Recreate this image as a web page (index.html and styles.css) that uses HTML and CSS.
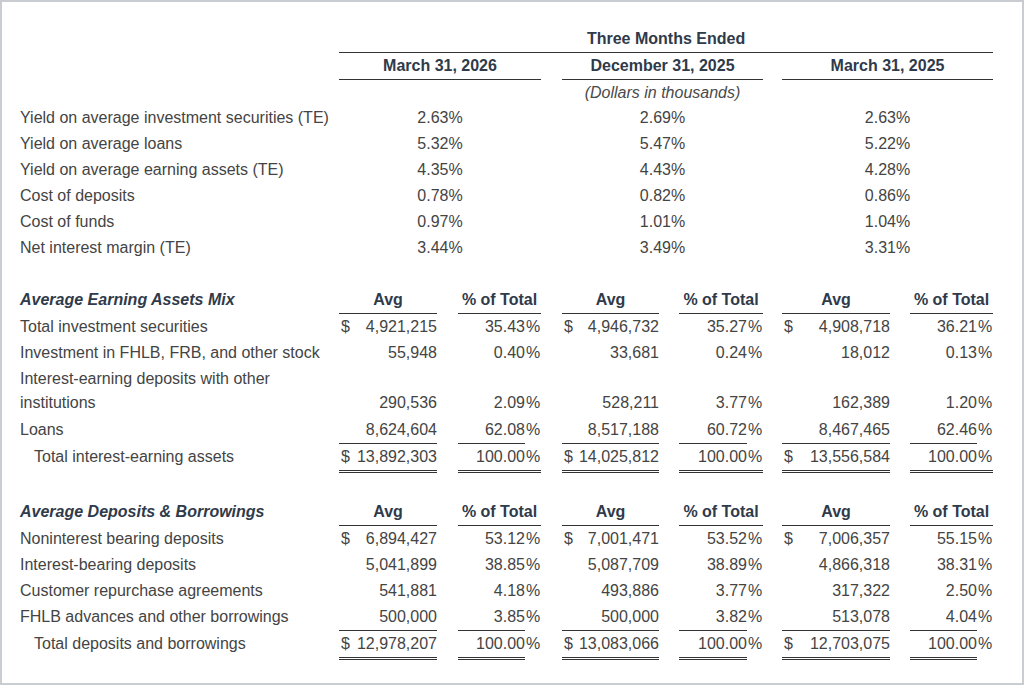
FILE: index.html
```html
<!DOCTYPE html>
<html lang="en">
<head>
<meta charset="utf-8">
<title>Three Months Ended</title>
<link rel="stylesheet" href="styles.css">
</head>
<body>
<div class="frame">
<table class="fin">
<colgroup>
<col class="c-lbl"><col class="c-avg1"><col class="c-gap21"><col class="c-pct67"><col class="c-pc"><col class="c-gap21">
<col class="c-avg2"><col class="c-gap20"><col class="c-pct68"><col class="c-pc"><col class="c-gap19">
<col class="c-avg3"><col class="c-gap20"><col class="c-pct67"><col class="c-pc">
</colgroup>
<tbody>
<tr class="r-title"><td></td><td colspan="14" class="hd">Three Months Ended</td></tr>
<tr class="r-dates"><td></td><td colspan="4" class="hd">March 31, 2026</td><td></td><td colspan="4" class="hd">December 31, 2025</td><td></td><td colspan="4" class="hd">March 31, 2025</td></tr>
<tr class="r-note"><td></td><td colspan="4"></td><td></td><td colspan="4" class="note">(Dollars in thousands)</td><td></td><td colspan="4"></td></tr>
<tr><td class="lbl">Yield on average investment securities (TE)</td><td colspan="4" class="ctr">2.63%</td><td></td><td colspan="4" class="ctr">2.69%</td><td></td><td colspan="4" class="ctr">2.63%</td></tr>
<tr><td class="lbl">Yield on average loans</td><td colspan="4" class="ctr">5.32%</td><td></td><td colspan="4" class="ctr">5.47%</td><td></td><td colspan="4" class="ctr">5.22%</td></tr>
<tr><td class="lbl">Yield on average earning assets (TE)</td><td colspan="4" class="ctr">4.35%</td><td></td><td colspan="4" class="ctr">4.43%</td><td></td><td colspan="4" class="ctr">4.28%</td></tr>
<tr><td class="lbl">Cost of deposits</td><td colspan="4" class="ctr">0.78%</td><td></td><td colspan="4" class="ctr">0.82%</td><td></td><td colspan="4" class="ctr">0.86%</td></tr>
<tr><td class="lbl">Cost of funds</td><td colspan="4" class="ctr">0.97%</td><td></td><td colspan="4" class="ctr">1.01%</td><td></td><td colspan="4" class="ctr">1.04%</td></tr>
<tr><td class="lbl">Net interest margin (TE)</td><td colspan="4" class="ctr">3.44%</td><td></td><td colspan="4" class="ctr">3.49%</td><td></td><td colspan="4" class="ctr">3.31%</td></tr>
<tr class="blank"><td colspan="15"></td></tr>

<tr class="sec"><td class="sec-lbl">Average Earning Assets Mix</td><td class="hd">Avg</td><td></td><td colspan="2" class="hd">% of Total</td><td></td><td class="hd">Avg</td><td></td><td colspan="2" class="hd">% of Total</td><td></td><td class="hd">Avg</td><td></td><td colspan="2" class="hd">% of Total</td></tr>
<tr><td class="lbl">Total investment securities</td><td class="num"><span class="cur">$</span>4,921,215</td><td></td><td class="num">35.43</td><td class="pc">%</td><td></td><td class="num"><span class="cur">$</span>4,946,732</td><td></td><td class="num">35.27</td><td class="pc">%</td><td></td><td class="num"><span class="cur">$</span>4,908,718</td><td></td><td class="num">36.21</td><td class="pc">%</td></tr>
<tr><td class="lbl">Investment in FHLB, FRB, and other stock</td><td class="num">55,948</td><td></td><td class="num">0.40</td><td class="pc">%</td><td></td><td class="num">33,681</td><td></td><td class="num">0.24</td><td class="pc">%</td><td></td><td class="num">18,012</td><td></td><td class="num">0.13</td><td class="pc">%</td></tr>
<tr class="wrap"><td class="lbl">Interest-earning deposits with other institutions</td><td class="num">290,536</td><td></td><td class="num">2.09</td><td class="pc">%</td><td></td><td class="num">528,211</td><td></td><td class="num">3.77</td><td class="pc">%</td><td></td><td class="num">162,389</td><td></td><td class="num">1.20</td><td class="pc">%</td></tr>
<tr><td class="lbl">Loans</td><td class="num">8,624,604</td><td></td><td class="num">62.08</td><td class="pc">%</td><td></td><td class="num">8,517,188</td><td></td><td class="num">60.72</td><td class="pc">%</td><td></td><td class="num">8,467,465</td><td></td><td class="num">62.46</td><td class="pc">%</td></tr>
<tr class="tot"><td class="lbl ind">Total interest-earning assets</td><td class="num ln"><span class="cur">$</span>13,892,303</td><td></td><td class="num ln">100.00</td><td class="pc dbl">%</td><td></td><td class="num ln"><span class="cur">$</span>14,025,812</td><td></td><td class="num ln">100.00</td><td class="pc dbl">%</td><td></td><td class="num ln"><span class="cur">$</span>13,556,584</td><td></td><td class="num ln">100.00</td><td class="pc dbl">%</td></tr>
<tr class="blank"><td colspan="15"></td></tr>

<tr class="sec"><td class="sec-lbl">Average Deposits &amp; Borrowings</td><td class="hd">Avg</td><td></td><td colspan="2" class="hd">% of Total</td><td></td><td class="hd">Avg</td><td></td><td colspan="2" class="hd">% of Total</td><td></td><td class="hd">Avg</td><td></td><td colspan="2" class="hd">% of Total</td></tr>
<tr><td class="lbl">Noninterest bearing deposits</td><td class="num"><span class="cur">$</span>6,894,427</td><td></td><td class="num">53.12</td><td class="pc">%</td><td></td><td class="num"><span class="cur">$</span>7,001,471</td><td></td><td class="num">53.52</td><td class="pc">%</td><td></td><td class="num"><span class="cur">$</span>7,006,357</td><td></td><td class="num">55.15</td><td class="pc">%</td></tr>
<tr><td class="lbl">Interest-bearing deposits</td><td class="num">5,041,899</td><td></td><td class="num">38.85</td><td class="pc">%</td><td></td><td class="num">5,087,709</td><td></td><td class="num">38.89</td><td class="pc">%</td><td></td><td class="num">4,866,318</td><td></td><td class="num">38.31</td><td class="pc">%</td></tr>
<tr><td class="lbl">Customer repurchase agreements</td><td class="num">541,881</td><td></td><td class="num">4.18</td><td class="pc">%</td><td></td><td class="num">493,886</td><td></td><td class="num">3.77</td><td class="pc">%</td><td></td><td class="num">317,322</td><td></td><td class="num">2.50</td><td class="pc">%</td></tr>
<tr><td class="lbl">FHLB advances and other borrowings</td><td class="num">500,000</td><td></td><td class="num">3.85</td><td class="pc">%</td><td></td><td class="num">500,000</td><td></td><td class="num">3.82</td><td class="pc">%</td><td></td><td class="num">513,078</td><td></td><td class="num">4.04</td><td class="pc">%</td></tr>
<tr class="tot"><td class="lbl ind">Total deposits and borrowings</td><td class="num ln"><span class="cur">$</span>12,978,207</td><td></td><td class="num ln">100.00</td><td class="pc">%</td><td></td><td class="num ln"><span class="cur">$</span>13,083,066</td><td></td><td class="num ln">100.00</td><td class="pc">%</td><td></td><td class="num ln"><span class="cur">$</span>12,703,075</td><td></td><td class="num ln">100.00</td><td class="pc">%</td></tr>
</tbody>
</table>
</div>
</body>
</html>
```
FILE: styles.css
```css
html, body {
  margin: 0;
  padding: 0;
  background: #ffffff;
}

.frame {
  box-sizing: border-box;
  width: 1024px;
  height: 685px;
  border: 2px solid #c9ccd0;
  padding: 24px 0 0 18px;
  font-family: "Liberation Sans", Arial, sans-serif;
  font-size: 16px;
  color: #444444;
}

.fin {
  table-layout: fixed;
  width: 973px;
  border-collapse: separate;
  border-spacing: 0;
}

.c-lbl { width: 319px; }
.c-avg1 { width: 98px; }
.c-avg2 { width: 97px; }
.c-avg3 { width: 108px; }
.c-pct67 { width: 67px; }
.c-pct68 { width: 68px; }
.c-pc { width: 16px; }
.c-gap21 { width: 21px; }
.c-gap20 { width: 20px; }
.c-gap19 { width: 19px; }

.fin td {
  padding: 1px 0;
  line-height: 24px;
  vertical-align: bottom;
  white-space: nowrap;
}

.fin td.lbl {
  white-space: normal;
  text-align: left;
}

.fin td.ind {
  padding-left: 14px;
}

.fin .wrap td {
  padding-bottom: 2px;
}

/* header rows */
.r-title td,
.r-dates td,
.sec td {
  border-bottom: 1px solid transparent;
}

.fin td.hd {
  font-weight: bold;
  text-align: center;
  color: #2f3a4a;
  border-bottom-color: #333333;
}

.r-note td {
  line-height: 23px;
}

.note {
  font-style: italic;
  text-align: center;
  color: #4a4a4a;
}

.ctr {
  text-align: center;
}

.sec-lbl {
  font-weight: bold;
  font-style: italic;
  color: #2f3a4a;
}

.num {
  text-align: right;
}

.fin td.pc {
  text-align: left;
  padding-left: 1px;
}

.cur {
  float: left;
  margin-left: 2px;
}

.blank td {
  height: 24px;
}

/* total rows */
.tot td {
  border-top: 1px solid transparent;
  border-bottom: 3px double transparent;
}

.fin .tot td.ln {
  border-top-color: #333333;
  border-bottom-color: #333333;
}

.fin .tot td.dbl {
  border-bottom-color: #333333;
}
```
